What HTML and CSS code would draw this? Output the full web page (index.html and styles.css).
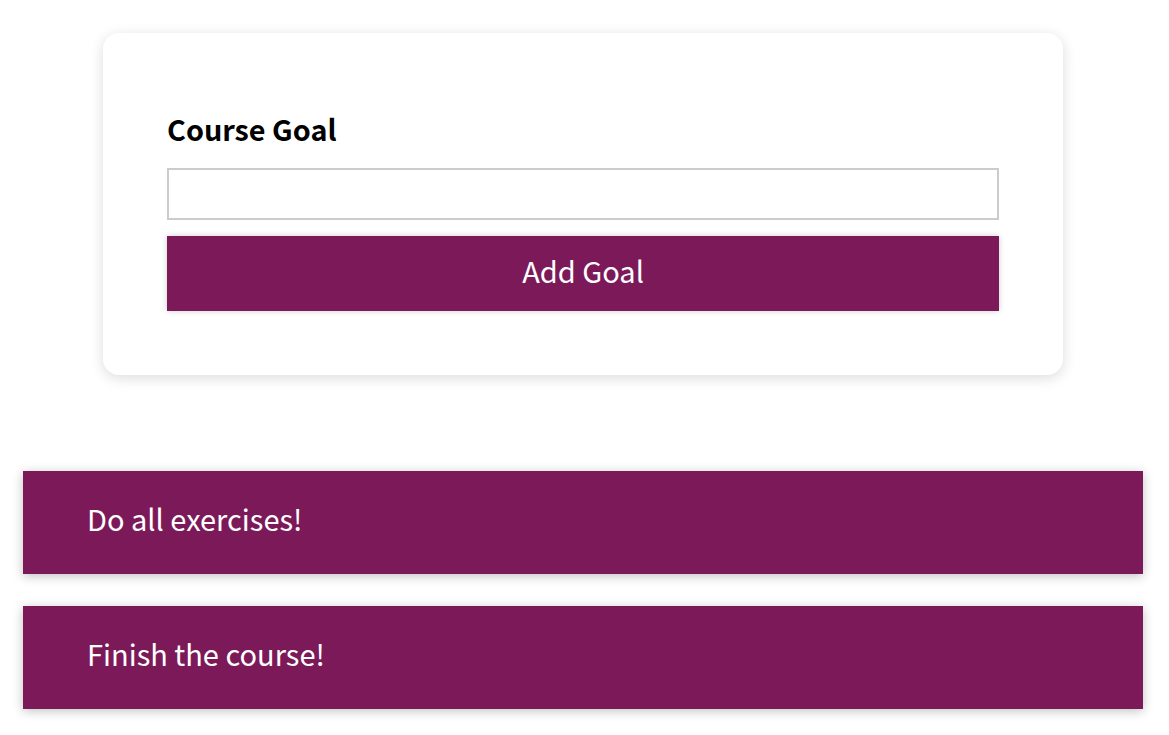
FILE: index.html
```html
<!DOCTYPE html>
<html lang="en">
<head>
<meta charset="utf-8">
<title>Course Goals</title>
<link rel="stylesheet" href="styles.css">
</head>
<body>
<section class="goal-form">
  <form class="form" onsubmit="return false;">
    <label class="form-label" for="goal">Course Goal</label>
    <input class="form-input" id="goal" type="text">
    <button class="form-button" type="submit">Add Goal</button>
  </form>
</section>
<section class="goals">
  <ul class="goal-list">
    <li class="goal-item">Do all exercises!</li>
    <li class="goal-item">Finish the course!</li>
  </ul>
</section>
</body>
</html>
```
FILE: styles.css
```css
* { box-sizing: border-box; }
html { background: #ffffff; }
body {
  margin: 0;
  padding: 33px 3px 26px 0;
  font-family: "Noto Sans CJK KR", "Noto Sans", sans-serif;
  color: #000;
}
.goal-form {
  width: 960px;
  margin: 0 auto;
  padding: 64px;
  background: #fff;
  border-radius: 16px;
  box-shadow: 0 3px 14px rgba(0, 0, 0, 0.14);
}
.form { display: flex; flex-direction: column; margin: 0; }
.form-label {
  display: block;
  font-size: 28.8px;
  font-weight: 700;
  line-height: 45px;
  margin: 9px 0 17px;
}
.form-input {
  display: block;
  width: 100%;
  height: 52px;
  border: 2px solid #ccc;
  font: inherit;
  font-size: 26px;
  padding: 0 8px;
  margin: 0;
  outline: none;
}
.form-button {
  margin-top: 16px;
  height: 75px;
  width: 100%;
  border: none;
  background: #7c1959;
  color: #fff;
  font-family: inherit;
  font-size: 29px;
  padding: 0 0 8px;
  cursor: pointer;
  box-shadow: 0 0 6px rgba(0, 0, 0, 0.2);
}
.goals {
  width: 1120px;
  margin: 96px auto 0;
}
.goal-list { list-style: none; margin: 0; padding: 0; display: flex; flex-direction: column; gap: 32px; }
.goal-item {
  background: #7c1959;
  color: #fff;
  font-size: 29px;
  line-height: 39px;
  padding: 28px 64px 36px;
  box-shadow: 0 2px 10px rgba(0, 0, 0, 0.25);
}
```
